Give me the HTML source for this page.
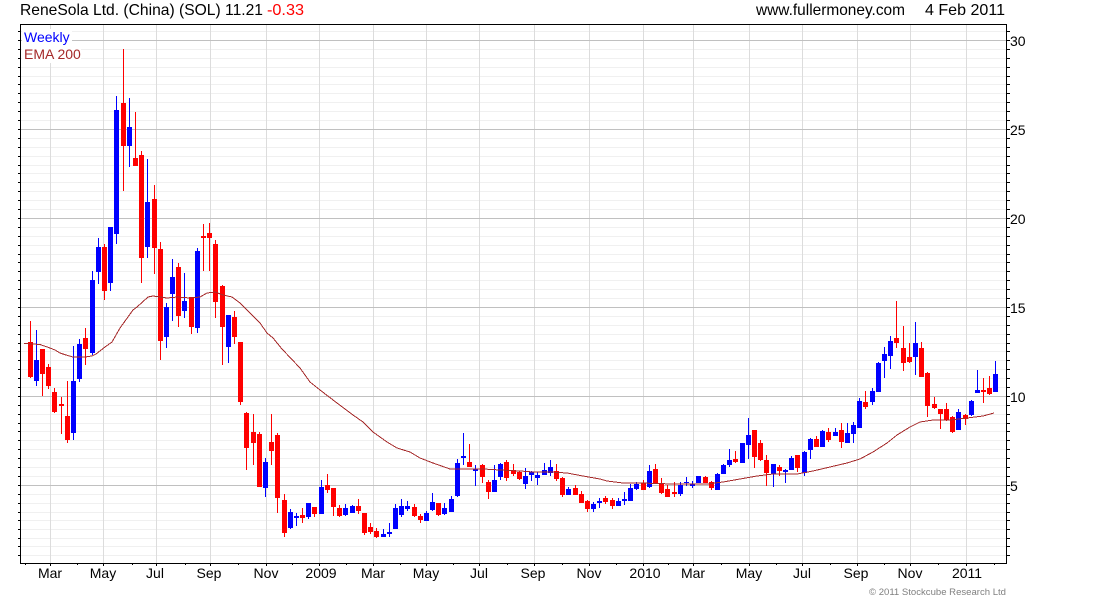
<!DOCTYPE html>
<html><head><meta charset="utf-8"><title>ReneSola Ltd. (China)</title>
<style>html,body{margin:0;padding:0;background:#fff;width:1100px;height:600px;overflow:hidden}svg{display:block;font-family:"Liberation Sans",Arial,sans-serif}</style>
</head><body>
<svg width="1100" height="600" viewBox="0 0 1100 600" xmlns="http://www.w3.org/2000/svg">
<g shape-rendering="crispEdges" fill="none">
<path stroke="#f0f0f0" d="M21 31.5H1006M21 49.5H1006M21 58.5H1006M21 67.5H1006M21 76.5H1006M21 84.5H1006M21 93.5H1006M21 102.5H1006M21 111.5H1006M21 120.5H1006M21 138.5H1006M21 147.5H1006M21 156.5H1006M21 165.5H1006M21 173.5H1006M21 182.5H1006M21 191.5H1006M21 200.5H1006M21 209.5H1006M21 227.5H1006M21 236.5H1006M21 245.5H1006M21 254.5H1006M21 262.5H1006M21 271.5H1006M21 280.5H1006M21 289.5H1006M21 298.5H1006M21 316.5H1006M21 325.5H1006M21 334.5H1006M21 343.5H1006M21 351.5H1006M21 360.5H1006M21 369.5H1006M21 378.5H1006M21 387.5H1006M21 405.5H1006M21 414.5H1006M21 423.5H1006M21 431.5H1006M21 440.5H1006M21 449.5H1006M21 458.5H1006M21 467.5H1006M21 476.5H1006M21 494.5H1006M21 503.5H1006M21 512.5H1006M21 520.5H1006M21 529.5H1006M21 538.5H1006M21 546.5H1006M21 555.5H1006"/>
<path stroke="#dcdcdc" d="M50.5 25V563M103.5 25V563M156.5 25V563M210.5 25V563M266.5 25V563M319.5 25V563M373.5 25V563M426.5 25V563M479.5 25V563M534.5 25V563M589.5 25V563M643.5 25V563M693.5 25V563M749.5 25V563M802.5 25V563M857.5 25V563M910.5 25V563M966.5 25V563"/>
<path stroke="#c0c0c0" d="M21 40.5H1006M21 129.5H1006M21 218.5H1006M21 307.5H1006M21 396.5H1006M21 485.5H1006"/>
</g>
<g shape-rendering="crispEdges">
<rect x="22" y="29" width="50" height="17" fill="#fff"/>
<rect x="22" y="46" width="59" height="17" fill="#fff"/>
</g>
<g fill="none" shape-rendering="crispEdges">
<path stroke="#f00" stroke-width="1" d="M30.5 321V378M42.5 349V396M48.5 364V389M54.5 388V413M61.5 397V434M67.5 381V443M85.5 328V365M104.5 244V300M123.5 49V191M135.5 112V166M141.5 151V283M154.5 185V274M160.5 242V360M178.5 263V327M191.5 297V334M203.5 224V271M209.5 223V271M215.5 240V318M222.5 285V365M234.5 311V344M240.5 342V405M246.5 412V470M253.5 414V465M259.5 432V487M271.5 414V465M277.5 433V513M284.5 494V537M302.5 508V523M314.5 507V517M327.5 474V493M333.5 488V516M339.5 505V517M358.5 499V514M364.5 513V535M370.5 523V534M376.5 528V538M414.5 504V517M420.5 514V523M438.5 503V516M469.5 444V467M482.5 464V483M488.5 480V499M506.5 460V481M513.5 464V476M519.5 471V480M556.5 464V481M562.5 477V497M575.5 485V495M581.5 491V503M587.5 500V512M605.5 496V504M612.5 498V509M643.5 480V490M655.5 464V484M661.5 478V494M667.5 485V497M674.5 482V497M705.5 476V483M711.5 481V490M735.5 451V463M754.5 430V468M760.5 440V461M766.5 455V486M779.5 465V476M797.5 455V472M816.5 436V447M828.5 428V442M841.5 423V448M865.5 391V409M896.5 301V348M903.5 326V371M909.5 343V363M921.5 342V377M927.5 372V417M934.5 397V409M940.5 409V429M946.5 403V421M952.5 416V433M965.5 414V425M983.5 378V403M989.5 376V395"/>
<path stroke="#f00" stroke-width="5" d="M30.5 342V377M42.5 349V374M48.5 367V386M54.5 392V412M61.5 404V406M67.5 416V440M85.5 338V349M104.5 247V291M123.5 103V146M135.5 158V166M141.5 155V258M154.5 199V248M160.5 249V341M178.5 267V316M191.5 297V327M203.5 236V238M209.5 233V238M215.5 244V302M222.5 286V327M234.5 317V337M240.5 342V402M246.5 413V448M253.5 432V443M259.5 434V487M271.5 442V451M277.5 435V498M284.5 500V533M302.5 515V518M314.5 507V514M327.5 485V490M333.5 488V507M339.5 508V516M358.5 506V511M364.5 513V533M370.5 527V532M376.5 531V537M414.5 507V516M420.5 516V520M438.5 503V515M469.5 462V467M482.5 465V477M488.5 482V492M506.5 462V478M513.5 470V474M519.5 472V479M556.5 471V479M562.5 478V495M575.5 488V495M581.5 494V503M587.5 501V509M605.5 498V502M612.5 500V506M643.5 483V490M655.5 469V483M661.5 484V493M667.5 489V497M674.5 492V494M705.5 477V483M711.5 482V488M735.5 459V462M754.5 430V457M760.5 443V460M766.5 460V473M779.5 467V471M797.5 455V468M816.5 439V447M828.5 432V440M841.5 430V442M865.5 402V407M896.5 338V343M903.5 348V363M909.5 357V362M921.5 348V377M927.5 373V406M934.5 404V408M940.5 409V414M946.5 409V420M952.5 417V432M965.5 415V419M983.5 390V392M989.5 388V394"/>
<path stroke="#00f" stroke-width="1" d="M36.5 330V386M73.5 346V440M79.5 339V382M92.5 271V355M98.5 238V284M110.5 227V291M116.5 96V244M129.5 98V167M147.5 159V258M166.5 303V348M172.5 259V321M184.5 273V318M197.5 248V333M228.5 315V363M265.5 458V497M290.5 509V529M296.5 513V526M308.5 503V519M321.5 480V514M345.5 504V516M352.5 505V513M383.5 529V537M389.5 523V537M395.5 504V529M401.5 499V517M407.5 501V511M426.5 511V521M432.5 493V511M444.5 503V515M451.5 496V512M457.5 459V497M463.5 433V465M475.5 465V486M494.5 465V492M500.5 463V480M525.5 468V489M531.5 471V481M537.5 472V485M544.5 463V475M550.5 460V476M568.5 487V495M593.5 502V512M599.5 498V508M618.5 498V506M624.5 492V505M630.5 484V501M636.5 482V490M649.5 465V488M680.5 482V496M686.5 477V486M692.5 481V488M698.5 476V483M717.5 473V490M723.5 464V474M729.5 449V467M742.5 443V463M748.5 418V459M773.5 464V487M785.5 469V483M791.5 456V470M804.5 451V476M810.5 438V459M822.5 430V447M835.5 428V436M847.5 423V443M853.5 422V443M859.5 398V428M872.5 388V405M878.5 362V392M884.5 347V378M890.5 336V369M915.5 322V375M958.5 409V430M971.5 400V416M977.5 370V393M995.5 361V392"/>
<path stroke="#00f" stroke-width="5" d="M36.5 360V381M73.5 381V433M79.5 344V379M92.5 280V353M98.5 247V272M110.5 227V283M116.5 110V234M129.5 127V146M147.5 202V247M166.5 307V337M172.5 277V294M184.5 301V311M197.5 251V328M228.5 315V347M265.5 462V488M290.5 512V528M296.5 516V518M308.5 503V517M321.5 487V514M345.5 508V515M352.5 506V513M383.5 534V537M389.5 532V534M395.5 508V529M401.5 506V515M407.5 506V509M426.5 513V521M432.5 502V510M444.5 508V514M451.5 499V512M457.5 463V496M463.5 456V458M475.5 469V471M494.5 480V492M500.5 464V477M525.5 476V484M531.5 472V475M537.5 475V478M544.5 470V475M550.5 467V473M568.5 489V495M593.5 504V509M599.5 501V503M618.5 501V506M624.5 499V501M630.5 488V501M636.5 484V489M649.5 471V487M680.5 485V494M686.5 482V483M692.5 484V486M698.5 476V483M717.5 474V490M723.5 465V474M729.5 460V465M742.5 443V463M748.5 435V445M773.5 464V474M785.5 470V472M791.5 458V470M804.5 452V473M810.5 439V450M822.5 431V447M835.5 432V436M847.5 433V443M853.5 425V434M859.5 401V428M872.5 391V402M878.5 363V392M884.5 354V361M890.5 341V356M915.5 343V357M958.5 412V430M971.5 401V415M977.5 390V393M995.5 374V392"/>
</g>
<path fill="none" stroke="#a52a2a" stroke-width="1" shape-rendering="crispEdges" d="M24 343.5L40 344.5L50 348L55 350L60 353L66 355L73 357L85 357L92 356L96 354L105 347L112 342L120 328L133 310L137 307L148 297L153 296L167 298L178 297L190 298L200 297L207 293L215 292L223 295L232 297L240 303L250 313L260 323L267 333L273 338L282 349L300 368L310 382L320 390L337 403L353 415L363 422L373 432L387 442L397 448L410 452L420 458L433 463L450 469L467 469L483 469L500 470L520 471L533 472L550 472L567 473L583 476L600 479L607 481L623 483L640 483L673 484L690 484L707 484L723 482L740 479L757 476L773 474L797 474L813 471L830 467L847 463L860 459L873 452L887 443L897 435L910 427L920 422L933 420L950 420L967 418L983 416L994 413"/>
<g shape-rendering="crispEdges" fill="none" stroke="#000">
<path d="M20.5 24.5H1006.5V563.5H20.5Z"/>
<path d="M18 31.5H20M18 40.5H20M18 49.5H20M18 58.5H20M18 67.5H20M18 76.5H20M18 84.5H20M18 93.5H20M18 102.5H20M18 111.5H20M18 120.5H20M18 129.5H20M18 138.5H20M18 147.5H20M18 156.5H20M18 165.5H20M18 173.5H20M18 182.5H20M18 191.5H20M18 200.5H20M18 209.5H20M18 218.5H20M18 227.5H20M18 236.5H20M18 245.5H20M18 254.5H20M18 262.5H20M18 271.5H20M18 280.5H20M18 289.5H20M18 298.5H20M18 307.5H20M18 316.5H20M18 325.5H20M18 334.5H20M18 343.5H20M18 351.5H20M18 360.5H20M18 369.5H20M18 378.5H20M18 387.5H20M18 396.5H20M18 405.5H20M18 414.5H20M18 423.5H20M18 431.5H20M18 440.5H20M18 449.5H20M18 458.5H20M18 467.5H20M18 476.5H20M18 485.5H20M18 494.5H20M18 503.5H20M18 512.5H20M18 520.5H20M18 529.5H20M18 538.5H20M18 546.5H20M18 555.5H20"/>
<path d="M1007 31.5H1010M1007 40.5H1010M1007 49.5H1010M1007 58.5H1010M1007 67.5H1010M1007 76.5H1010M1007 84.5H1010M1007 93.5H1010M1007 102.5H1010M1007 111.5H1010M1007 120.5H1010M1007 129.5H1010M1007 138.5H1010M1007 147.5H1010M1007 156.5H1010M1007 165.5H1010M1007 173.5H1010M1007 182.5H1010M1007 191.5H1010M1007 200.5H1010M1007 209.5H1010M1007 218.5H1010M1007 227.5H1010M1007 236.5H1010M1007 245.5H1010M1007 254.5H1010M1007 262.5H1010M1007 271.5H1010M1007 280.5H1010M1007 289.5H1010M1007 298.5H1010M1007 307.5H1010M1007 316.5H1010M1007 325.5H1010M1007 334.5H1010M1007 343.5H1010M1007 351.5H1010M1007 360.5H1010M1007 369.5H1010M1007 378.5H1010M1007 387.5H1010M1007 396.5H1010M1007 405.5H1010M1007 414.5H1010M1007 423.5H1010M1007 431.5H1010M1007 440.5H1010M1007 449.5H1010M1007 458.5H1010M1007 467.5H1010M1007 476.5H1010M1007 485.5H1010M1007 494.5H1010M1007 503.5H1010M1007 512.5H1010M1007 520.5H1010M1007 529.5H1010M1007 538.5H1010M1007 546.5H1010M1007 555.5H1010"/>
<path d="M50.5 564V566M103.5 564V566M156.5 564V566M210.5 564V566M266.5 564V566M319.5 564V566M373.5 564V566M426.5 564V566M479.5 564V566M534.5 564V566M589.5 564V566M643.5 564V566M693.5 564V566M749.5 564V566M802.5 564V566M857.5 564V566M910.5 564V566M966.5 564V566"/>
<path d="M25.5 564V565M77.5 564V565M132.5 564V565M185.5 564V565M238.5 564V565M292.5 564V565M346.5 564V565M400.5 564V565M453.5 564V565M507.5 564V565M562.5 564V565M616.5 564V565M668.5 564V565M721.5 564V565M776.5 564V565M830.5 564V565M884.5 564V565M938.5 564V565M994.5 564V565"/>
</g>
<g font-size="16" fill="#000">
<text x="20" y="15" textLength="243" lengthAdjust="spacingAndGlyphs">ReneSola Ltd. (China) (SOL) 11.21</text>
<text x="267" y="15" fill="#f00" textLength="37" lengthAdjust="spacingAndGlyphs">-0.33</text>
<text x="756" y="15" textLength="149" lengthAdjust="spacingAndGlyphs">www.fullermoney.com</text>
<text x="925" y="15" textLength="80" lengthAdjust="spacingAndGlyphs">4 Feb 2011</text>
</g>
<text x="24" y="42" font-size="14" fill="#00f">Weekly</text>
<text x="24" y="59" font-size="14" fill="#a52a2a">EMA 200</text>
<g font-size="14" fill="#000">
<text x="1010" y="46">30</text><text x="1010" y="135">25</text><text x="1010" y="224">20</text><text x="1010" y="313">15</text><text x="1010" y="402">10</text><text x="1010" y="491">5</text>
</g>
<g font-size="14" fill="#000" text-anchor="middle">
<text x="50" y="578">Mar</text><text x="103" y="578">May</text><text x="155" y="578">Jul</text><text x="209" y="578">Sep</text><text x="266" y="578">Nov</text><text x="321" y="578">2009</text><text x="373" y="578">Mar</text><text x="426" y="578">May</text><text x="479" y="578">Jul</text><text x="533" y="578">Sep</text><text x="589" y="578">Nov</text><text x="645" y="578">2010</text><text x="693" y="578">Mar</text><text x="749" y="578">May</text><text x="802" y="578">Jul</text><text x="856" y="578">Sep</text><text x="910" y="578">Nov</text><text x="967" y="578">2011</text>
</g>
<text x="869" y="595" font-size="9" fill="#808080" textLength="137" lengthAdjust="spacingAndGlyphs">© 2011 Stockcube Research Ltd</text>
</svg>
</body></html>
